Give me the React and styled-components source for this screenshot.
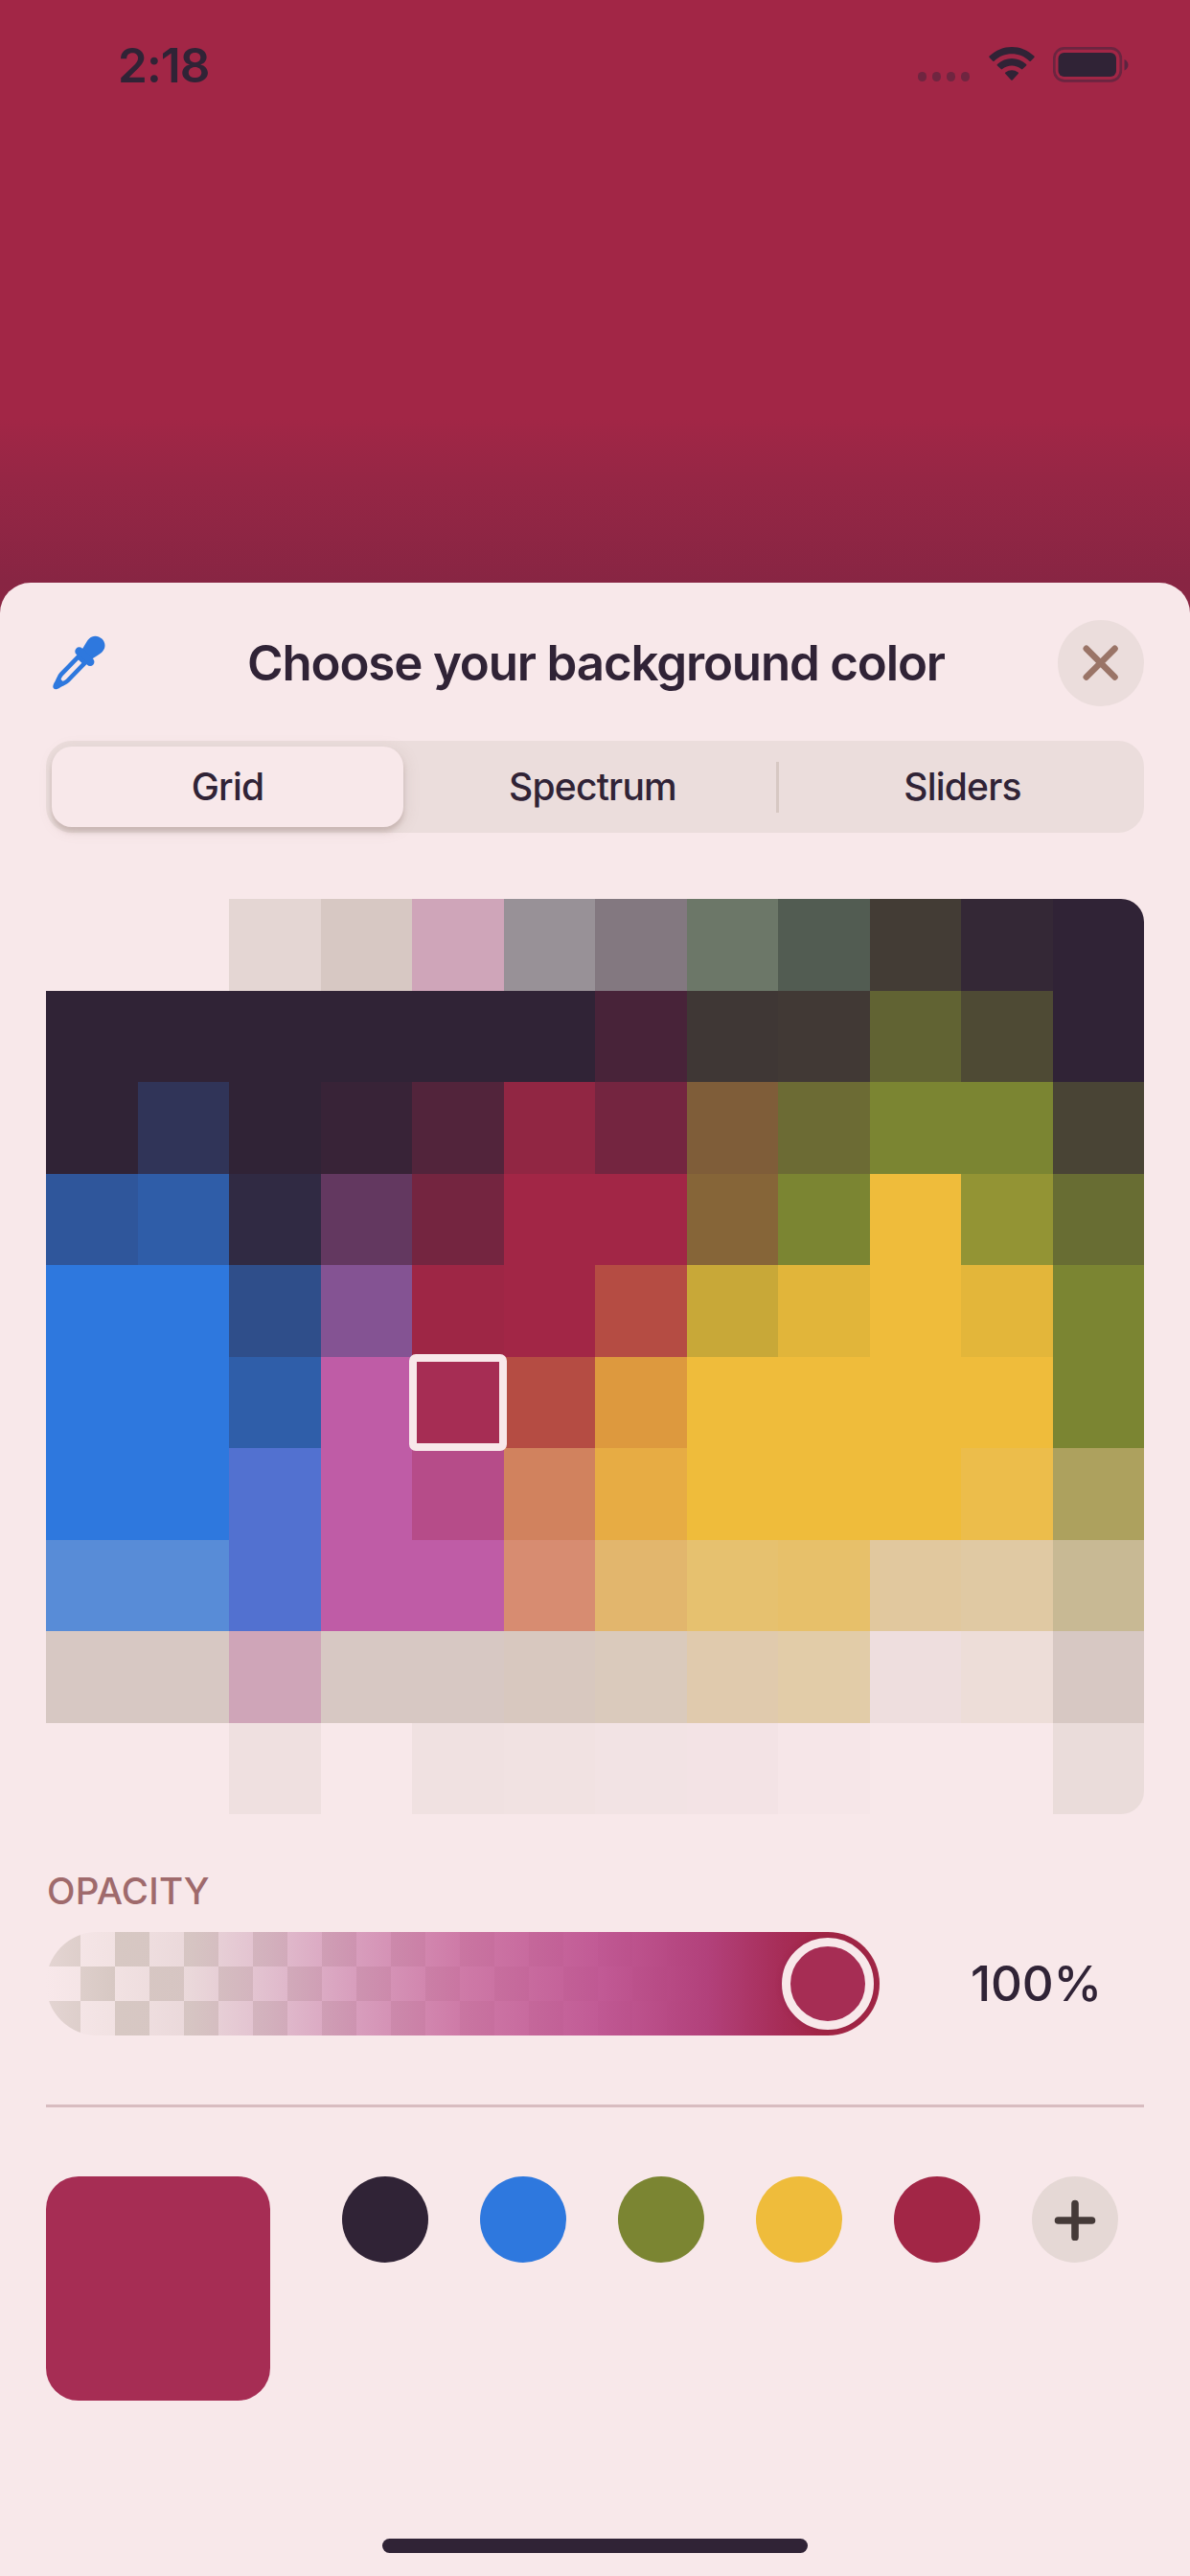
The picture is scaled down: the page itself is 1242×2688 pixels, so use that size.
import React from "react";
import styled, { createGlobalStyle } from "styled-components";

const C = {
  paper: "#F8E8EA",
  taupe: "#D7C8C3",
  ink: "#302336",
  crimson: "#A22646",
  blue: "#2E78DE",
  olive: "#7B8532",
  amber: "#EFBC3B",
  orchid: "#BF5CA6",
  picked: "#A62D54",
};

const { paper: W, taupe: T, ink: D, crimson: R, blue: B, olive: G, amber: Y, orchid: P } = C;

const ROWS = [
  [W, W, "#E4D6D3", T, "#CFA5B9", "#989197", "#837880", "#6C7768", "#525C52", "#433C35", "#342836", D],
  [D, D, D, D, D, D, "#482339", "#3F3735", "#413935", "#616333", "#4E4A34", D],
  [D, "#303458", D, "#382337", "#52243B", "#912643", "#742540", "#7F5D39", "#6C6B34", G, G, "#494435"],
  ["#2F569B", "#2F5DA8", "#302A43", "#633860", "#742540", R, R, "#866538", G, Y, "#939434", "#686D33"],
  [B, B, "#2F4E8A", "#845393", "#9E2645", R, "#B54C43", "#C8A838", "#E1B53A", Y, "#E3B63A", G],
  [B, B, "#2F5EA9", P, C.picked, "#B54C43", "#DD993E", Y, Y, Y, Y, G],
  [B, B, "#5271D0", P, "#B64C89", "#D1825E", "#E7AC44", Y, Y, Y, "#ECBD4B", "#ADA15E"],
  ["#588CD7", "#588CD7", "#5271D0", P, P, "#D78C71", "#E2B66D", "#E6C16F", "#E7C06A", "#E1C89E", "#E0C9A3", "#C8B994"],
  [T, T, "#CFA5B8", T, T, "#D8C8BF", "#DACABC", "#E0CAAD", "#E2CCA8", "#EEDEDE", "#EDDDD8", T],
  [W, W, "#EFE0E0", W, "#F0E1E1", "#F1E2E2", "#F2E3E4", "#F3E3E5", "#F6E6E8", W, W, "#EADCDA"],
];

const SELECTED = { row: 5, col: 4 };
const TABS = ["Grid", "Spectrum", "Sliders"];
const SWATCHES = [D, B, G, Y, R];

const GlobalStyle = createGlobalStyle`
  * { box-sizing: border-box; }
  body { margin: 0; background: ${C.paper}; }
  button { border: 0; padding: 0; margin: 0; background: none; font: inherit; color: inherit; }
`;

const Screen = styled.main`
  width: 1242px;
  height: 2688px;
  display: flex;
  flex-direction: column;
  overflow: hidden;
  font-family: Inter, "Liberation Sans", sans-serif;
  color: ${C.ink};
  background: linear-gradient(
    to bottom,
    ${C.crimson} 436px,
    #962645 500px,
    #882543 608px,
    #8b2543 650px
  );
`;

const StatusBar = styled.header`
  flex: 0 0 608px;
  display: flex;
  justify-content: space-between;
  align-items: flex-start;
  padding: 44px 63px 0 123px;
`;

const Time = styled.div`
  font-size: 49.5px;
  line-height: 48px;
  font-weight: 600;
  letter-spacing: -0.9px;
`;

const StatusIcons = styled.div`
  display: flex;
  align-items: flex-start;
  padding-top: 4px;
`;

const Dots = styled.div`
  display: flex;
  gap: 5.5px;
  margin: 27px 20px 0 0;
`;

const Dot = styled.i`
  width: 9.5px;
  height: 9.5px;
  border-radius: 50%;
  background: #6f2540;
`;

const WifiIcon = styled.svg`
  width: 48px;
  height: 38px;
  margin-right: 19px;
`;

const BatteryIcon = styled.svg`
  width: 80px;
  height: 38px;
`;

const Sheet = styled.section`
  flex: 1;
  display: flex;
  flex-direction: column;
  padding: 39px 48px 24px;
  border-radius: 32px 32px 0 0;
  background: ${C.paper};
`;

const SheetHeader = styled.div`
  display: grid;
  grid-template-columns: 90px 1fr 90px;
  align-items: center;
  height: 90px;
`;

const EyedropperButton = styled.button`
  width: 56px;
  height: 56px;
  margin-left: 6px;
  color: ${C.blue};
  svg { display: block; overflow: visible; }
`;

const Title = styled.h1`
  margin: 0;
  padding-left: 2px;
  text-align: center;
  font-size: 51px;
  line-height: 60px;
  font-weight: 600;
  letter-spacing: -1.15px;
  white-space: nowrap;
`;

const RoundButton = styled.button`
  display: flex;
  align-items: center;
  justify-content: center;
  width: 90px;
  height: 90px;
  border-radius: 50%;
  background: ${(p) => p.$fill};
  color: ${(p) => p.$ink};
`;

const Segmented = styled.div`
  display: grid;
  grid-template-columns: repeat(3, 1fr);
  height: 96px;
  margin-top: 36px;
  padding: 6px;
  border-radius: 27px;
  background: #ebdddc;
`;

const Segment = styled.button`
  display: flex;
  align-items: center;
  justify-content: center;
  margin-right: ${(p) => (p.$active ? "11px" : "0")};
  padding-right: ${(p) => (p.$active ? "0" : "5px")};
  border-radius: 21px;
  font-size: 39px;
  line-height: 48px;
  font-weight: 500;
  letter-spacing: -0.8px;
  background: ${(p) => (p.$active ? C.paper : "transparent")};
  box-shadow: ${(p) => (p.$active ? "0 5px 5px rgba(150, 125, 118, 0.32), 2px 3px 16px rgba(150, 125, 118, 0.16)" : "none")};

  & + &:last-child {
    padding-right: 0;
  }
  & + &:last-child::before {
    content: "";
    width: 3px;
    height: 53px;
    margin-right: auto;
    background: ${C.taupe};
  }
  & + &:last-child::after {
    content: "";
    width: 3px;
    margin-left: auto;
    margin-right: -11px;
  }
`;

const ColorGrid = styled.div`
  display: grid;
  grid-template-columns: repeat(12, 1fr);
  grid-template-rows: repeat(10, 95.5px);
  margin-top: 69px;
`;

const Cell = styled.div`
  position: relative;
  background: ${(p) => p.$color};
  border-radius: ${(p) => p.$corner || "0"};

  &::after {
    content: "";
    display: ${(p) => (p.$selected ? "block" : "none")};
    position: absolute;
    z-index: 1;
    inset: -3px;
    border: 8px solid ${C.paper};
    border-radius: 7px;
  }
`;

const OpacityLabel = styled.h2`
  margin: 56px 0 19px 1px;
  font-size: 38.5px;
  line-height: 48px;
  font-weight: 500;
  letter-spacing: 0.2px;
  color: #9f6a6c;
`;

const OpacityRow = styled.div`
  display: flex;
  align-items: center;
  justify-content: space-between;
  height: 108px;
`;

const Track = styled.div`
  display: flex;
  align-items: center;
  justify-content: flex-end;
  width: 870px;
  height: 108px;
  padding-right: 6px;
  border-radius: 54px;
  background:
    linear-gradient(
      to right,
      rgba(248, 232, 234, 0.4) 0,
      rgba(215, 200, 195, 0.2) 72px,
      rgba(213, 192, 194, 0.4) 150px,
      rgba(207, 158, 184, 0.55) 230px,
      rgba(201, 124, 168, 0.68) 320px,
      rgba(199, 104, 156, 0.85) 430px,
      rgba(190, 82, 144, 0.95) 580px,
      #b2417b 690px,
      #a62c56 770px,
      ${C.crimson} 810px
    ),
    conic-gradient(${C.paper} 25%, ${C.taupe} 0 50%, ${C.paper} 0 75%, ${C.taupe} 0) 0 0 / 72px 72px;
`;

const Knob = styled.div`
  width: 96px;
  height: 96px;
  border: 9px solid ${C.paper};
  border-radius: 50%;
  background: ${C.picked};
  box-shadow: 0 0 6px rgba(120, 20, 50, 0.25);
`;

const OpacityValue = styled.output`
  width: 228px;
  padding-left: 3px;
  text-align: center;
  font-size: 51px;
  line-height: 60px;
  font-weight: 500;
  letter-spacing: -0.2px;
`;

const Rule = styled.hr`
  width: 100%;
  height: 3px;
  margin: 72px 0;
  border: 0;
  background: #d8bcc0;
`;

const SavedColors = styled.div`
  display: flex;
  align-items: flex-start;
  gap: 75px;
`;

const Preview = styled.div`
  width: 234px;
  height: 234px;
  border-radius: 34px;
  background: ${C.picked};
`;

const SwatchRow = styled.div`
  display: flex;
  gap: 54px;
`;

const Swatch = styled.button`
  width: 90px;
  height: 90px;
  border-radius: 50%;
  background: ${(p) => p.$color};
`;

const HomeIndicator = styled.div`
  align-self: center;
  width: 444px;
  height: 15px;
  margin-top: auto;
  border-radius: 8px;
  background: ${C.ink};
`;

function cornerOf(row, col) {
  if (row === 0 && col === 11) return "0 24px 0 0";
  if (row === 9 && col === 11) return "0 0 24px 0";
  return undefined;
}

function Wifi() {
  return (
    <WifiIcon viewBox="0 0 48 38" fill={C.ink}>
      <path d="M0.6 10.6C13.8-2.3 34.2-2.3 47.4 10.6Q48 11.3 47.4 12L43.8 15.7Q43.1 16.3 42.4 15.7C32 5.9 16 5.9 5.6 15.7Q4.9 16.3 4.2 15.7L0.6 12Q0 11.3 0.6 10.6Z" />
      <path d="M8.9 19C17.4 11 30.6 11 39.1 19Q39.8 19.7 39.1 20.4L35.3 24.1Q34.6 24.8 33.9 24.1C28.3 19.2 19.7 19.2 14.1 24.1Q13.4 24.8 12.7 24.1L8.9 20.4Q8.2 19.7 8.9 19Z" />
      <path d="M17.3 27.6C21.2 24.3 26.8 24.3 30.7 27.6Q31.4 28.3 30.7 29L24.7 35.5Q24 36.2 23.3 35.5L17.3 29Q16.6 28.3 17.3 27.6Z" />
    </WifiIcon>
  );
}

function Battery() {
  return (
    <BatteryIcon viewBox="0 0 80 38">
      <rect x="1.3" y="2.3" width="69.5" height="34" rx="10.5" fill="none" stroke="#6b2540" strokeWidth="2.7" />
      <rect x="5.5" y="7" width="60.5" height="25" rx="6" fill={C.ink} />
      <path d="M74.5 14v11.5q4-2 4-5.75t-4-5.75z" fill="#5c2440" />
    </BatteryIcon>
  );
}

function Eyedropper() {
  return (
    <svg width="56" height="56" viewBox="0 0 56 56">
      <g transform="translate(27.2 28.6) rotate(44) translate(0 -37)">
        <path
          d="M0 0.8C5.6 0.8 9.7 4.8 9.7 10C9.7 15 7.6 18.5 7 25H-7C-7.6 18.5-9.7 15-9.7 10C-9.7 4.800-5.6 0.8 0 0.8Z"
          fill="currentColor"
        />
        <rect x="-12.3" y="22.3" width="24.6" height="8.8" rx="4.4" fill="currentColor" />
        <path
          d="M-4.7 29V57C-4.7 61-2 64-1.5 68.5Q0 73 1.5 68.5C2 64 4.7 61 4.7 57V29"
          fill="none"
          stroke="currentColor"
          strokeWidth="4.6"
          strokeLinejoin="round"
        />
        <rect x="-6" y="29" width="12" height="4.5" fill="currentColor" />
        <path d="M-4.5 61L4.5 61L1.5 71Q0 73.5-1.5 71Z" fill="currentColor" />
      </g>
    </svg>
  );
}

function Close() {
  return (
    <svg width="40" height="40" viewBox="0 0 40 40" stroke="currentColor" strokeWidth="6.6" strokeLinecap="round">
      <path d="M4.8 4.8L34.5 34.5M34.5 4.8L4.8 34.5" />
    </svg>
  );
}

function Plus() {
  return (
    <svg width="44" height="44" viewBox="0 0 44 44" stroke="currentColor" strokeWidth="7.6" strokeLinecap="round">
      <path d="M22 5.5V40.5M4.5 23H39.5" />
    </svg>
  );
}

export default function App() {
  return (
    <Screen>
      <GlobalStyle />
      <StatusBar>
        <Time>2:18</Time>
        <StatusIcons>
          <Dots>
            <Dot />
            <Dot />
            <Dot />
            <Dot />
          </Dots>
          <Wifi />
          <Battery />
        </StatusIcons>
      </StatusBar>

      <Sheet>
        <SheetHeader>
          <EyedropperButton aria-label="Pick from screen">
            <Eyedropper />
          </EyedropperButton>
          <Title>Choose your background color</Title>
          <RoundButton $fill="#ebdddc" $ink="#9a7467" aria-label="Close">
            <Close />
          </RoundButton>
        </SheetHeader>

        <Segmented>
          {TABS.map((tab) => (
            <Segment key={tab} $active={tab === "Grid"}>
              {tab}
            </Segment>
          ))}
        </Segmented>

        <ColorGrid>
          {ROWS.map((colors, row) =>
            colors.map((color, col) => (
              <Cell
                key={`${row}-${col}`}
                $color={color}
                $corner={cornerOf(row, col)}
                $selected={row === SELECTED.row && col === SELECTED.col}
              />
            ))
          )}
        </ColorGrid>

        <OpacityLabel>OPACITY</OpacityLabel>
        <OpacityRow>
          <Track>
            <Knob />
          </Track>
          <OpacityValue>100%</OpacityValue>
        </OpacityRow>

        <Rule />

        <SavedColors>
          <Preview />
          <SwatchRow>
            {SWATCHES.map((color) => (
              <Swatch key={color} $color={color} />
            ))}
            <RoundButton $fill="#e5d8d5" $ink="#453a38" aria-label="Add color">
              <Plus />
            </RoundButton>
          </SwatchRow>
        </SavedColors>

        <HomeIndicator />
      </Sheet>
    </Screen>
  );
}
